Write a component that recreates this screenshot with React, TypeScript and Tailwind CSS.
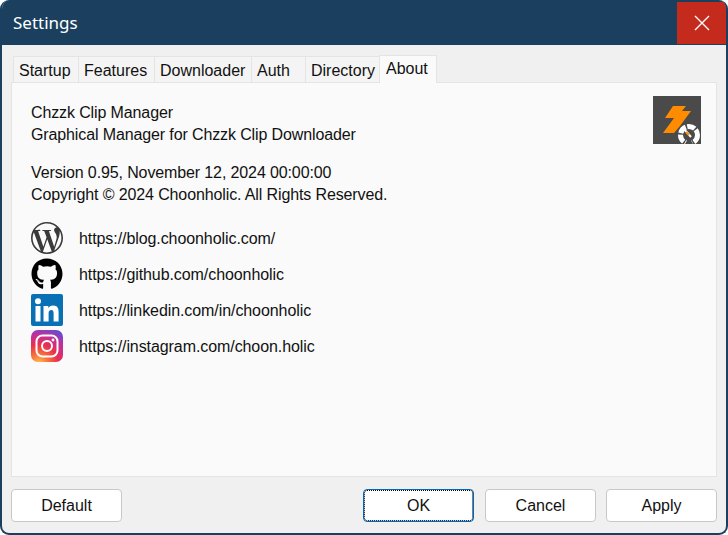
import React from 'react';
import { FaGithub } from 'react-icons/fa';
import { SiWordpress } from 'react-icons/si';

const tabs = [
  { label: 'Startup', width: 'w-[65px]' },
  { label: 'Features', width: 'w-[76px]' },
  { label: 'Downloader', width: 'w-[97px]' },
  { label: 'Auth', width: 'w-[54px]' },
  { label: 'Directory', width: 'w-[74px]' },
];

const AppLogo = () => (
  <svg width="48" height="48" viewBox="0 0 48 48" className="shrink-0">
    <rect width="48" height="48" fill="#4a4a4a" />
    <path d="M20 10 H33 L29 15 H38 L27 30 L21 37 H10 L21 22 H12 Z" fill="#ff8c00" />
    <circle cx="36" cy="39" r="8.5" fill="#4a4a4a" stroke="#ffffff" strokeWidth="5" strokeDasharray="8 1.5" />
    <path d="M31 33 L38 41" stroke="#ffffff" strokeWidth="2" />
    <path d="M33 36 L36 39" stroke="#ff8c00" strokeWidth="2" />
    <path d="M32 48 H40 L36 41 Z" fill="#4a4a4a" />
  </svg>
);

const LinkedinIcon = () => (
  <svg width="32" height="32" viewBox="0 0 32 32">
    <rect width="32" height="32" rx="2" fill="#0a70b5" />
    <rect x="4.5" y="12" width="5" height="15.5" fill="#fff" />
    <circle cx="7" cy="7.2" r="3" fill="#fff" />
    <path d="M12.5 12 H17.3 V14.2 C18.2 12.7 19.9 11.6 22.2 11.6 C26.6 11.6 27.6 14.5 27.6 18.4 V27.5 H22.6 V19.4 C22.6 17.4 22.2 15.9 20.3 15.9 C18.3 15.9 17.6 17.4 17.6 19.4 V27.5 H12.5 Z" fill="#fff" />
  </svg>
);

const InstagramIcon = () => (
  <svg width="32" height="32" viewBox="0 0 32 32">
    <defs>
      <radialGradient id="igGrad" cx="0.25" cy="1.05" r="1.2">
        <stop offset="0" stopColor="#fec053" />
        <stop offset="0.25" stopColor="#f9703a" />
        <stop offset="0.5" stopColor="#e8304f" />
        <stop offset="0.75" stopColor="#c22f9a" />
        <stop offset="1" stopColor="#5b4fd6" />
      </radialGradient>
    </defs>
    <rect width="32" height="32" rx="7" fill="url(#igGrad)" />
    <rect x="5.5" y="5.5" width="21" height="21" rx="6" fill="none" stroke="#fff" strokeWidth="2" />
    <circle cx="16" cy="16" r="5" fill="none" stroke="#fff" strokeWidth="2" />
    <circle cx="22" cy="10" r="1.4" fill="#fff" />
  </svg>
);

const links = [
  { icon: <SiWordpress size={32} color="#3a3a3a" />, url: 'https://blog.choonholic.com/' },
  { icon: <FaGithub size={32} color="#000000" />, url: 'https://github.com/choonholic' },
  { icon: <LinkedinIcon />, url: 'https://linkedin.com/in/choonholic' },
  { icon: <InstagramIcon />, url: 'https://instagram.com/choon.holic' },
];

const DialogButton = ({ label, isDefault }: { label: string; isDefault?: boolean }) => (
  <button
    className={
      'w-[111px] h-[33px] bg-white rounded-[4px] border text-[16px] text-[#111] ' +
      (isDefault ? 'border-[#0067c0] outline-1 outline-dotted outline-black -outline-offset-2' : 'border-[#c8c8c8]')
    }
  >
    {label}
  </button>
);

export default function App() {
  return (
    <div className="w-[728px] h-[535px] bg-white font-['Liberation_Sans',Arial,sans-serif] text-[16px] leading-[22px] text-[#111]">
      <div className="w-full h-full flex flex-col bg-[#f0f0f0] border-2 border-t-0 border-[#1b3f5e] rounded-[9px] overflow-hidden">
        <div className="h-[45px] shrink-0 flex justify-between bg-[#1b3f5e] text-white">
          <span className="pl-[11px] pt-[11px] font-['Noto_Sans',sans-serif] text-[17px] leading-[24px]">Settings</span>
          <div className="w-[49px] h-[42px] mt-[2px] flex items-center justify-center bg-[#c42b1c]">
            <svg width="16" height="16" viewBox="0 0 16 16">
              <path d="M1 1 L15 15 M15 1 L1 15" stroke="#fff" strokeWidth="1.4" />
            </svg>
          </div>
        </div>

        <div className="flex-1 flex flex-col px-[9px] pt-[9px] pb-[11px]">
          <div className="h-[28px] shrink-0 flex items-end pl-[2px]">
            {tabs.map((tab) => (
              <div
                key={tab.label}
                className={`${tab.width} h-[26px] pl-[5px] pt-[3px] bg-[#f4f4f4] border border-b-0 border-r-0 border-[#e4e4e4] whitespace-nowrap`}
              >
                {tab.label}
              </div>
            ))}
            <div className="w-[58px] h-[28px] pl-[6px] pt-[2px] bg-[#fafafa] border border-b-0 border-[#e4e4e4] relative top-[1px] z-10">
              About
            </div>
          </div>

          <div className="flex-1 flex justify-between pl-[19px] pr-[15px] pt-[19px] bg-[#fafafa] border border-[#e4e4e4]">
            <div className="flex flex-col">
              <div className="tracking-[-0.12px]">Chzzk Clip Manager</div>
              <div className="tracking-[-0.12px]">Graphical Manager for Chzzk Clip Downloader</div>
              <div className="mt-[16px] tracking-[-0.12px]">Version 0.95, November 12, 2024 00:00:00</div>
              <div className="tracking-[-0.12px]">Copyright © 2024 Choonholic. All Rights Reserved.</div>
              <div className="mt-[16px] flex flex-col gap-[4px]">
                {links.map((link) => (
                  <div key={link.url} className="flex items-center gap-[16px] h-[32px]">
                    {link.icon}
                    <span className="pt-[2px] tracking-[-0.08px]">{link.url}</span>
                  </div>
                ))}
              </div>
            </div>
            <div className="-mt-[6px]">
              <AppLogo />
            </div>
          </div>

          <div className="mt-[12px] h-[33px] shrink-0 flex justify-between">
            <DialogButton label="Default" />
            <div className="flex">
              <DialogButton label="OK" isDefault />
              <div className="ml-[11px] mr-[10px]">
                <DialogButton label="Cancel" />
              </div>
              <DialogButton label="Apply" />
            </div>
          </div>
        </div>
      </div>
    </div>
  );
}
